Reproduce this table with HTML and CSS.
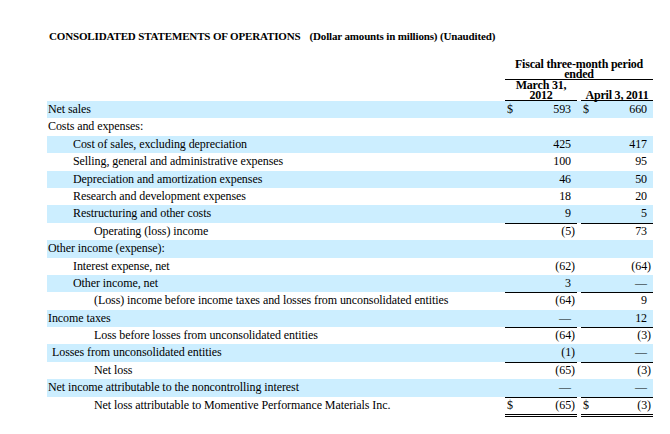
FILE: index.html
```html
<!DOCTYPE html>
<html lang="en">
<head>
<meta charset="utf-8">
<title>Consolidated Statements of Operations</title>
<link rel="stylesheet" href="styles.css">
</head>
<body>
<div class="page">
  <h1 class="title"><span class="main">CONSOLIDATED STATEMENTS OF OPERATIONS</span><span class="sub">(Dollar amounts in millions) (Unaudited)</span></h1>
  <div class="statement">
    <div class="head">
      <div class="period">Fiscal three-month period ended</div>
      <div class="colhead c1">March 31,<br>2012</div>
      <div class="colhead c2">April 3, 2011</div>
    </div>

    <div class="row alt">
      <div class="label l0">Net sales</div>
      <div class="val"><span>$</span><span class="pos">593</span></div>
      <div class="val"><span>$</span><span class="pos">660</span></div>
    </div>
    <div class="row">
      <div class="label l0">Costs and expenses:</div>
      <div class="val"></div><div class="val"></div>
    </div>
    <div class="row alt">
      <div class="label l1">Cost of sales, excluding depreciation</div>
      <div class="val"><span></span><span class="pos">425</span></div>
      <div class="val"><span></span><span class="pos">417</span></div>
    </div>
    <div class="row">
      <div class="label l1">Selling, general and administrative expenses</div>
      <div class="val"><span></span><span class="pos">100</span></div>
      <div class="val"><span></span><span class="pos">95</span></div>
    </div>
    <div class="row alt">
      <div class="label l1">Depreciation and amortization expenses</div>
      <div class="val"><span></span><span class="pos">46</span></div>
      <div class="val"><span></span><span class="pos">50</span></div>
    </div>
    <div class="row">
      <div class="label l1">Research and development expenses</div>
      <div class="val"><span></span><span class="pos">18</span></div>
      <div class="val"><span></span><span class="pos">20</span></div>
    </div>
    <div class="row alt">
      <div class="label l1">Restructuring and other costs</div>
      <div class="val u"><span></span><span class="pos">9</span></div>
      <div class="val u"><span></span><span class="pos">5</span></div>
    </div>
    <div class="row">
      <div class="label l2">Operating (loss) income</div>
      <div class="val"><span></span><span>(5)</span></div>
      <div class="val"><span></span><span class="pos">73</span></div>
    </div>
    <div class="row alt">
      <div class="label l0">Other income (expense):</div>
      <div class="val"></div><div class="val"></div>
    </div>
    <div class="row">
      <div class="label l1">Interest expense, net</div>
      <div class="val"><span></span><span>(62)</span></div>
      <div class="val"><span></span><span>(64)</span></div>
    </div>
    <div class="row alt">
      <div class="label l1">Other income, net</div>
      <div class="val u"><span></span><span class="pos">3</span></div>
      <div class="val u"><span></span><span class="pos">—</span></div>
    </div>
    <div class="row">
      <div class="label l2">(Loss) income before income taxes and losses from unconsolidated entities</div>
      <div class="val"><span></span><span>(64)</span></div>
      <div class="val"><span></span><span class="pos">9</span></div>
    </div>
    <div class="row alt">
      <div class="label l0">Income taxes</div>
      <div class="val u"><span></span><span class="pos">—</span></div>
      <div class="val u"><span></span><span class="pos">12</span></div>
    </div>
    <div class="row">
      <div class="label l2">Loss before losses from unconsolidated entities</div>
      <div class="val"><span></span><span>(64)</span></div>
      <div class="val"><span></span><span>(3)</span></div>
    </div>
    <div class="row alt">
      <div class="label lx">Losses from unconsolidated entities</div>
      <div class="val u"><span></span><span>(1)</span></div>
      <div class="val u"><span></span><span class="pos">—</span></div>
    </div>
    <div class="row">
      <div class="label l2">Net loss</div>
      <div class="val"><span></span><span>(65)</span></div>
      <div class="val"><span></span><span>(3)</span></div>
    </div>
    <div class="row alt">
      <div class="label l0">Net income attributable to the noncontrolling interest</div>
      <div class="val u"><span></span><span class="pos">—</span></div>
      <div class="val u"><span></span><span class="pos">—</span></div>
    </div>
    <div class="row last">
      <div class="label l2">Net loss attributable to Momentive Performance Materials Inc.</div>
      <div class="val uu"><span>$</span><span>(65)</span></div>
      <div class="val uu"><span>$</span><span>(3)</span></div>
    </div>
  </div>
</div>
</body>
</html>
```

FILE: styles.css
```css
* { box-sizing: border-box; }

html, body {
  margin: 0;
  padding: 0;
  background: #fff;
  color: #000;
  font-family: "Liberation Serif", "Times New Roman", serif;
}

.page {
  padding: 30px 0 0 47px;
}

.title {
  margin: 0 0 17px 2px;
  font-size: 11px;
  line-height: 12px;
  font-weight: bold;
  letter-spacing: -0.15px;
  white-space: nowrap;
}

.title .main {
  margin-right: 9px;
}

.statement {
  width: 606px;
}

.head,
.row {
  display: grid;
  grid-template-columns: 454px 72px 72px;
  column-gap: 4px;
}

.head {
  font-weight: bold;
  font-size: 12px;
  line-height: 10px;
  letter-spacing: -0.2px;
}

.period {
  grid-column: 2 / 4;
  grid-row: 1;
  text-align: center;
  border-bottom: 1px solid #000;
  padding: 0 6px;
}

.colhead {
  grid-row: 2;
  text-align: center;
  border-bottom: 1px solid #000;
  align-self: end;
}

.colhead.c1 {
  grid-column: 2;
}

.colhead.c2 {
  grid-column: 3;
}

.row {
  height: 17.4px;
  font-size: 12px;
  line-height: 17.4px;
  letter-spacing: -0.08px;
  white-space: nowrap;
}

.row.alt {
  background: #cceeff;
}

.label.l0 { padding-left: 1px; }
.label.l1 { padding-left: 26px; }
.label.l2 { padding-left: 47px; }
.label.lx { padding-left: 5px; }

.val {
  display: flex;
  justify-content: space-between;
  padding: 0 2px;
}

.val .pos {
  padding-right: 4px;
}

.val.u {
  border-bottom: 1px solid #000;
}

.row.last {
  height: auto;
}

.val.uu {
  height: 20.4px;
  border-bottom: 3px double #000;
}
```
